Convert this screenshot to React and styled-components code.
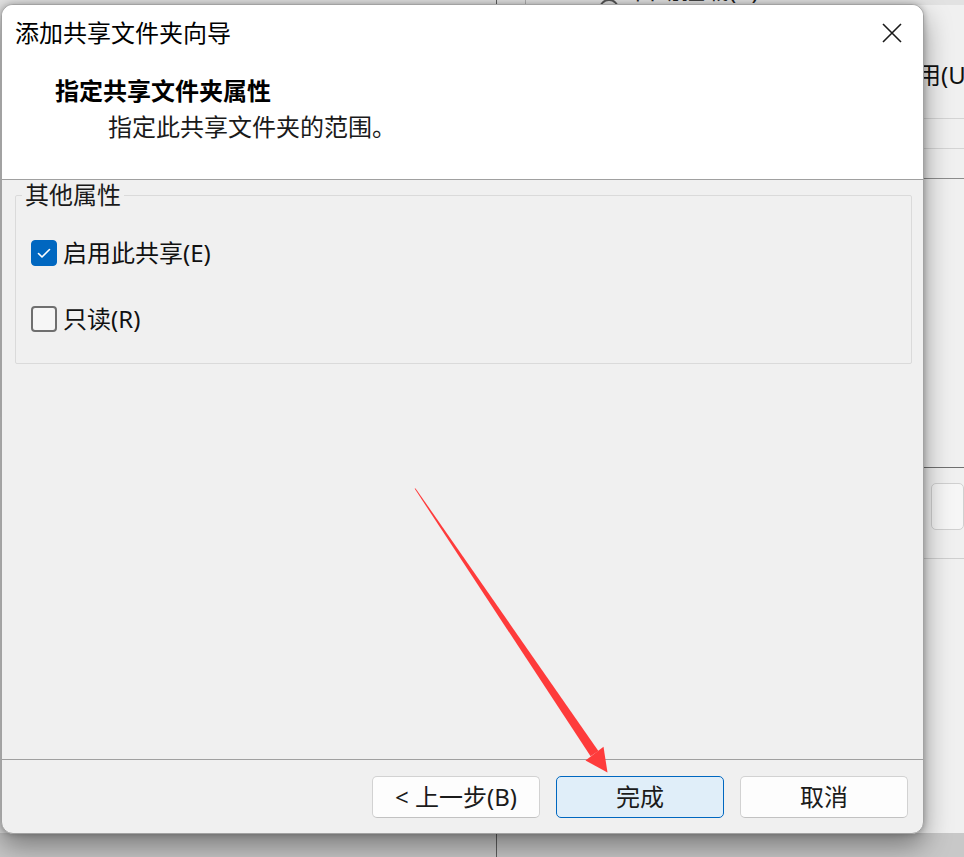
import React from 'react';
import styled, { createGlobalStyle } from 'styled-components';

const Global = createGlobalStyle`
  html, body { margin: 0; padding: 0; }
  body {
    font-family: "Noto Sans", "Noto Sans CJK SC", sans-serif;
    background: #e4e4e4;
    overflow: hidden;
  }
  * { box-sizing: border-box; }
`;

const Desktop = styled.div`
  position: relative;
  width: 964px;
  height: 857px;
  overflow: hidden;
  font-size: 24px;
  color: #1a1a1a;
`;

/* ---------- window behind the dialog ---------- */
const BackWindow = styled.div`
  position: absolute;
  inset: 0;
  display: flex;
`;

const LeftPane = styled.div`
  flex: none;
  width: 497px;
  border-right: 1px solid #5e5e5e;
  background: #e6e6e6;
  display: flex;
  flex-direction: column;
`;

const RightPane = styled.div`
  flex: 1;
  min-width: 0;
  overflow: hidden;
  display: flex;
  flex-direction: column;
  background: #f0f0f0;
`;

const TopRow = styled.div`
  height: 5px;
  display: flex;
  background: #e2e2e2;
`;

const SubCell = styled.div`
  flex: none;
  width: 29px;
  border-right: 1px solid #b0b0b0;
`;

const ClipRow = styled.div`
  flex: 1;
  height: 5px;
  overflow: hidden;
  display: flex;
  align-items: flex-end;
  gap: 14px;
  padding-left: ${p => p.$indent}px;
  background: #e2e2e2;
`;

const ClipText = styled.span`
  line-height: 30px;
  white-space: nowrap;
  color: #222;
`;

const Radio = styled.span`
  width: 20px;
  height: 20px;
  border: 2px solid #555;
  border-radius: 50%;
  margin-bottom: -14px;
  flex: none;
`;

const RightContent = styled.div`
  flex: 1;
  min-width: 0;
  display: flex;
  flex-direction: column;
  padding-left: 29px;
`;

const Spacer = styled.div`
  flex: 1;
`;

const BottomStrip = styled.div`
  height: 24px;
  background: #c8c8c8;
`;

const OptionRow = styled.div`
  flex: none;
  height: ${p => p.$h}px;
  border-bottom: 1px solid ${p => p.$line};
  padding: ${p => p.$top || 0}px 0 0 ${p => p.$indent || 0}px;
  line-height: 32px;
  white-space: nowrap;
  color: #111;
`;

const InputBox = styled.div`
  flex: none;
  margin: 15px 0 0 405px;
  height: 47px;
  border: 1px solid #d0d0d0;
  border-radius: 5px;
  background: #f6f6f6;
`;

const LightLine = styled.div`
  flex: none;
  margin-top: 28px;
  border-bottom: 1px solid #cfcfcf;
`;

/* ---------- dialog ---------- */
const Dialog = styled.div`
  position: absolute;
  left: 1px;
  top: 4px;
  width: 923px;
  height: 830px;
  border: 1px solid #a2a2a2;
  border-radius: 12px;
  overflow: hidden;
  display: flex;
  flex-direction: column;
  background: #f0f0f0;
  box-shadow: 0 12px 28px rgba(0, 0, 0, 0.4), 0 0 6px rgba(0, 0, 0, 0.25);
`;

const Header = styled.div`
  background: #ffffff;
  border-bottom: 1px solid #a0a0a0;
  padding-bottom: 36px;
`;

const TitleBar = styled.div`
  height: 56px;
  display: flex;
  align-items: center;
  justify-content: space-between;
  padding: 0 21px 0 13px;
`;

const Title = styled.div`
  font-size: 24px;
  line-height: 32px;
  color: #000;
`;

const CloseButton = styled.div`
  width: 20px;
  height: 20px;
  display: flex;
`;

const Heading = styled.div`
  margin-top: 14px;
  padding-left: 53px;
  font-weight: 700;
  line-height: 32px;
  color: #000;
`;

const SubHeading = styled.div`
  margin-top: 4px;
  padding-left: 106px;
  line-height: 32px;
  color: #1a1a1a;
`;

const Body = styled.div`
  flex: 1;
  padding: 0 11px 0 13px;
`;

const Group = styled.fieldset`
  margin: 0;
  padding: 0;
  border: 1px solid #dadada;
  border-radius: 2px;
  min-width: 0;
`;

const Legend = styled.legend`
  margin-left: 6px;
  padding: 0 3px;
  line-height: 30px;
  font-size: 24px;
  color: #1a1a1a;
`;

const CheckList = styled.div`
  display: flex;
  flex-direction: column;
  gap: 34px;
  padding: 27px 0 28px 15px;
`;

const CheckRow = styled.label`
  display: flex;
  align-items: center;
  gap: 6px;
  line-height: 32px;
  color: #111;
`;

const Box = styled.span`
  width: 26px;
  height: 26px;
  border-radius: 4px;
  display: flex;
  align-items: center;
  justify-content: center;
  flex: none;
  background: ${p => (p.$checked ? '#0067c0' : '#f6f6f6')};
  border: ${p => (p.$checked ? '1px solid #0067c0' : '2px solid #6f6f6f')};
`;

const Footer = styled.div`
  border-top: 1px solid #a0a0a0;
  padding: 16px 15px 15px;
  display: flex;
  justify-content: flex-end;
  gap: 16px;
`;

const Button = styled.div`
  width: 168px;
  height: 42px;
  border-radius: 5px;
  display: flex;
  align-items: center;
  justify-content: center;
  font-size: 24px;
  line-height: 1;
  color: #1b1b1b;
  background: ${p => (p.$primary ? '#e0eef9' : '#fdfdfd')};
  border: 1px solid ${p => (p.$primary ? '#0067c0' : '#d2d2d2')};
  border-bottom-color: ${p => (p.$primary ? '#0067c0' : '#c2c2c2')};
`;

const Overlay = styled.svg`
  position: absolute;
  inset: 0;
  pointer-events: none;
`;

function Check({ checked, children }) {
  return (
    <CheckRow>
      <Box $checked={checked}>
        {checked && (
          <svg width="20" height="20" viewBox="0 0 20 20">
            <path d="M4.5 10.5 L8 14 L15.5 6.5" fill="none" stroke="#fff" strokeWidth="1.6" strokeLinecap="round" strokeLinejoin="round" />
          </svg>
        )}
      </Box>
      {children}
    </CheckRow>
  );
}

export default function App() {
  return (
    <Desktop>
      <Global />
      <BackWindow>
        <LeftPane>
          <ClipRow $indent={73}>
            <ClipText>共享名称</ClipText>
          </ClipRow>
          <Spacer />
          <BottomStrip />
        </LeftPane>
        <RightPane>
          <TopRow>
            <SubCell />
            <ClipRow $indent={73}>
              <Radio />
              <ClipText>自动挂载(A)</ClipText>
            </ClipRow>
          </TopRow>
          <RightContent>
            <OptionRow $h={114} $top={54} $indent={367} $line="#d4d4d4">启用(U)</OptionRow>
            <OptionRow $h={30} $line="#d4d4d4" />
            <OptionRow $h={30} $line="#8c8c8c" />
            <OptionRow $h={289} $line="#707070" />
            <InputBox />
            <LightLine />
            <Spacer />
          </RightContent>
          <BottomStrip />
        </RightPane>
      </BackWindow>

      <Dialog>
        <Header>
          <TitleBar>
            <Title>添加共享文件夹向导</Title>
            <CloseButton>
              <svg width="20" height="20" viewBox="0 0 20 20">
                <path d="M1 1 L19 19 M19 1 L1 19" stroke="#1a1a1a" strokeWidth="1.6" fill="none" />
              </svg>
            </CloseButton>
          </TitleBar>
          <Heading>指定共享文件夹属性</Heading>
          <SubHeading>指定此共享文件夹的范围。</SubHeading>
        </Header>
        <Body>
          <Group>
            <Legend>其他属性</Legend>
            <CheckList>
              <Check checked>启用此共享(E)</Check>
              <Check>只读(R)</Check>
            </CheckList>
          </Group>
        </Body>
        <Footer>
          <Button>&lt; 上一步(B)</Button>
          <Button $primary>完成</Button>
          <Button>取消</Button>
        </Footer>
      </Dialog>

      <Overlay width="964" height="857" viewBox="0 0 964 857">
        <polygon points="414.6,488.6 415.6,488.4 598.4,751 590.6,756.2" fill="#fe3b3b" />
        <polygon points="585.5,760.5 603.5,746.8 607.5,772.5" fill="#fe3b3b" />
      </Overlay>
    </Desktop>
  );
}
